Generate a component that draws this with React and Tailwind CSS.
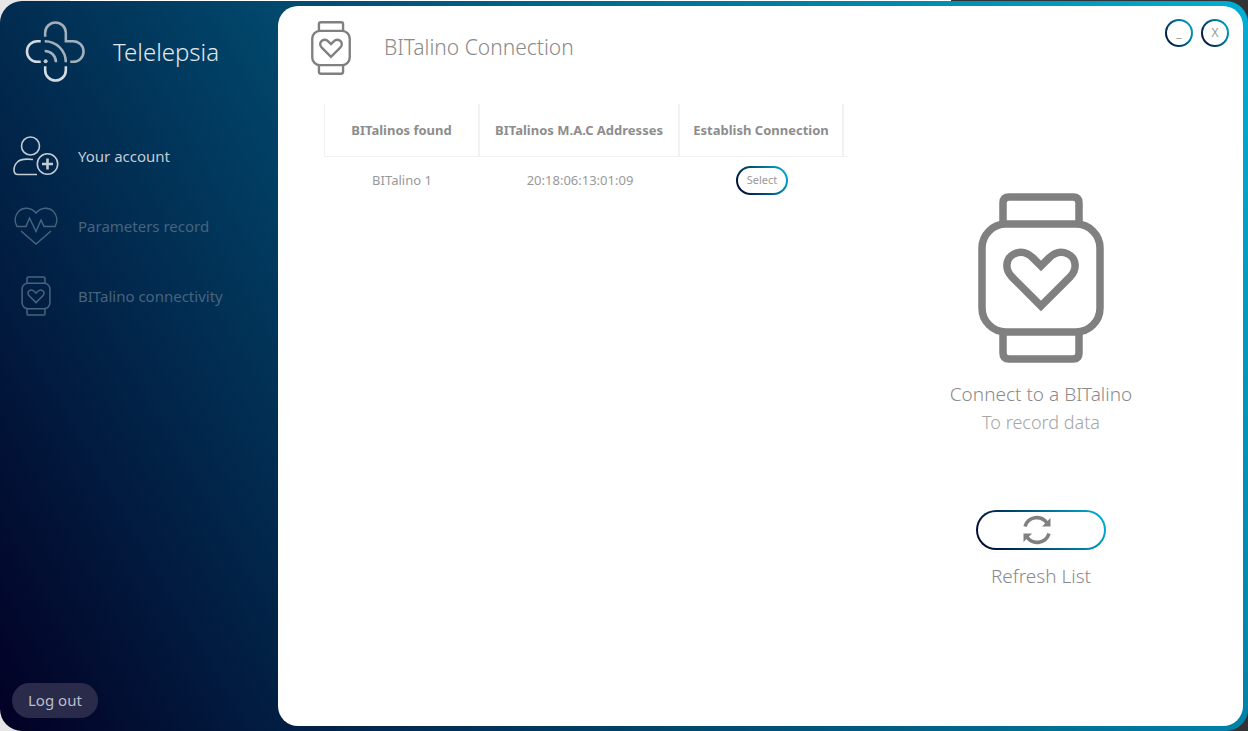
import React from "react";

function Watch({ className, strokeWidth }) {
  return (
    <svg viewBox="0 0 126 170" className={className} fill="none" stroke="currentColor" strokeWidth={strokeWidth} aria-hidden="true">
      <rect x="4" y="31" width="118" height="108" rx="24" />
      <path d="M25 31V10Q25 4 31 4H95Q101 4 101 10V31M25 139V160Q25 166 31 166H95Q101 166 101 160V139" />
      <path d="M63 113L34 84C26 76 28 65 36 61C44 57 50 60 55 65L63 73L71 65C76 60 82 57 90 61C98 65 100 76 92 84Z" />
    </svg>
  );
}

function Logo() {
  return (
    <svg viewBox="0 0 62 62" className="h-[61px] w-[61px]" fill="none" strokeWidth="2.600" aria-hidden="true">
      <g stroke="#a3b0bb">
        <path d="M20.500 16V12a10.500 10.500 0 0 1 21 0V20.500H49a10.500 10.500 0 0 1 0 21H46" />
        <path d="M20 20.500C32 20.500 41.500 30 41.500 42M20 30.500C26.500 30.500 31.500 35.500 31.500 42" />
      </g>
      <g stroke="#d2dbe1">
        <path d="M16 20.500H12.500a10.500 10.500 0 0 0 0 21H16M20.500 46V50a10.500 10.500 0 0 0 21 0V46" />
      </g>
      <circle cx="21" cy="41" r="2" fill="#c0cbd3" />
    </svg>
  );
}

function UserPlus() {
  return (
    <svg viewBox="0 0 46 40" className="h-10 w-[46px]" fill="none" stroke="currentColor" strokeWidth="1.600" aria-hidden="true">
      <circle cx="17.500" cy="10" r="9" />
      <path d="M20 23.500Q8 22 4.500 26Q1 29 1 34Q1 38.500 5 38.500H24" />
      <circle cx="34.500" cy="28" r="10.200" />
      <path strokeWidth="2.600" d="M34.500 22.500V33.500M29 28H40" />
    </svg>
  );
}

function HeartPulse() {
  return (
    <svg viewBox="0 0 44 38" className="h-[38px] w-11" fill="none" stroke="currentColor" strokeWidth="1.500" aria-hidden="true">
      <path d="M22 6C17 0 9 0 5 4C1 8 0 14 3 19.500H12L15.500 11L22 24.500L27 13L30 19.500H41C44 14 43 8 39 4C35 0 27 0 22 6ZM7 24L22 37L37 24" />
    </svg>
  );
}

function Refresh() {
  return (
    <svg viewBox="0 0 28 30" className="h-[30px] w-7" aria-hidden="true">
      <path fill="none" stroke="#808080" strokeWidth="3.500" d="M2 11.500C5 1.500 18 -.500 24 8M26 18.500C23 28.500 10 30.500 4 22" />
      <path fill="#808080" d="M27.500 3V11.500H19ZM.500 27V18.500H9Z" />
    </svg>
  );
}

const ring =
  "border-2 border-transparent [background:linear-gradient(white,white)_padding-box,linear-gradient(60deg,#020024,#00b4dc)_border-box]";

const navItems = [
  { label: "Your account", icon: <UserPlus />, active: true },
  { label: "Parameters record", icon: <HeartPulse /> },
  { label: "BITalino connectivity", icon: <Watch className="h-10 w-[30px]" strokeWidth="6.500" /> },
];

export default function App() {
  return (
    <div className="flex min-h-screen flex-col bg-[linear-gradient(90deg,#e6e6e6_70px,#ffffff_70px,#ffffff_951px,#333333_951px)] pt-px font-['Noto_Sans','Open_Sans',sans-serif]">
      <div className="flex flex-1 rounded-[22px] bg-[linear-gradient(60deg,#020024_0%,#00aed4_100%)] py-[5px] pr-[5px]">
        <aside className="flex w-[278px] shrink-0 flex-col">
          <div className="flex items-center gap-[27px] pt-[15px] pl-[25px]">
            <Logo />
            <span className="text-2xl font-light text-[#e2e7eb]">Telelepsia</span>
          </div>
          <nav className="mt-[39px] flex flex-col">
            {navItems.map((item) => (
              <a
                key={item.label}
                href="#"
                className={`flex h-[70px] items-center gap-[18px] pl-3 text-[15px] ${item.active ? "text-[#c3cbd4]" : "text-[#47647e]"}`}
              >
                <span className="flex w-12 shrink-0 justify-center">{item.icon}</span>
                {item.label}
              </a>
            ))}
          </nav>
          <button className="mt-auto mb-2 ml-3 h-[35px] self-start rounded-full bg-[#2a2b4b] px-4 text-[15px] text-[#bbbdc8]">
            Log out
          </button>
        </aside>

        <main className="flex min-w-0 flex-1 flex-col rounded-[20px] bg-white">
          <header className="flex items-start justify-between pt-[13px] pr-3.5 pl-8">
            <div className="flex items-center gap-8 pt-0.5">
              <Watch className="h-[54px] w-[42px] text-[#808080]" strokeWidth="7.500" />
              <h1 className="text-[21px] font-light text-[#8a8a8a]">BITalino Connection</h1>
            </div>
            <div className="flex gap-2">
              <button aria-label="Minimize" className={`h-7 w-7 rounded-full text-xs text-[#999999] ${ring}`}>_</button>
              <button aria-label="Close" className={`h-7 w-7 rounded-full text-xs text-[#999999] ${ring}`}>X</button>
            </div>
          </header>

          <div className="mt-[29px] flex flex-1 items-start justify-between pl-[46px]">
            <table className="w-[524px] table-fixed border-separate border-spacing-0 text-center text-[13px] text-[#999999]">
              <colgroup>
                <col className="w-[156px]" />
                <col className="w-[200px]" />
                <col className="w-[164px]" />
                <col />
              </colgroup>
              <thead>
                <tr className="h-[53px] text-[#8d8d8d]">
                  <th className="border-r-2 border-b border-l border-[#f1f1f1] pt-0.5">BITalinos found</th>
                  <th className="border-r-2 border-b border-[#f1f1f1] pt-0.5">BITalinos M.A.C Addresses</th>
                  <th className="border-r-2 border-b border-[#f1f1f1] pt-0.5">Establish Connection</th>
                  <td className="border-b border-[#f1f1f1]" />
                </tr>
              </thead>
              <tbody>
                <tr className="h-[46px]">
                  <td className="pt-0.5">BITalino 1</td>
                  <td className="pt-0.5">20:18:06:13:01:09</td>
                  <td>
                    <button className={`mx-auto block h-[29px] w-[52px] rounded-full text-[11px] ${ring}`}>Select</button>
                  </td>
                </tr>
              </tbody>
            </table>

            <section className="mt-[89px] mr-[106px] flex w-[192px] flex-col items-center text-center">
              <Watch className="h-[170px] w-[126px] text-[#808080]" strokeWidth="7.500" />
              <p className="mt-[17px] text-[19px] leading-7 font-light whitespace-nowrap text-[#8a8a8a]">Connect to a BITalino</p>
              <p className="text-[18px] leading-7 font-light text-[#a6a6a6]">To record data</p>
              <button id="refresh" aria-label="Refresh List" className={`mt-[74px] flex h-10 w-[130px] items-center rounded-full pl-[45px] ${ring}`}>
                <Refresh />
              </button>
              <label htmlFor="refresh" className="mt-3 text-[19px] leading-7 font-light text-[#8a8a8a]">Refresh List</label>
            </section>
          </div>
        </main>
      </div>
    </div>
  );
}
